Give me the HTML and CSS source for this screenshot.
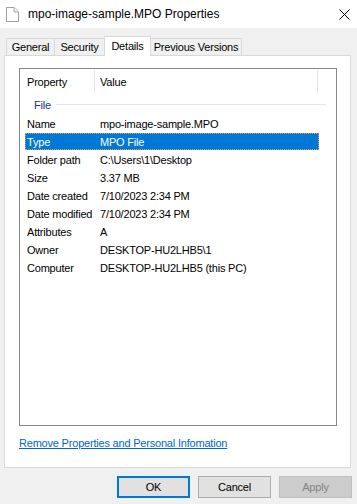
FILE: index.html
```html
<!DOCTYPE html>
<html>
<head>
<meta charset="utf-8">
<link rel="stylesheet" href="styles.css">
</head>
<body>
<div class="window">
  <div class="titlebar">
    <svg class="file-icon" width="13" height="15" viewBox="0 0 13 15">
      <path d="M0.5 0.5 H8 L12.5 5 V14.5 H0.5 Z" fill="#fff" stroke="#a0a0a0"/>
      <path d="M8 0.5 V5 H12.5" fill="#f4f4f4" stroke="#a0a0a0"/>
    </svg>
    <span class="title">mpo-image-sample.MPO Properties</span>
    <svg class="close" width="11" height="11" viewBox="0 0 11 11">
      <path d="M0.5 0.5 L10.5 10.5 M10.5 0.5 L0.5 10.5" stroke="#000" stroke-width="1"/>
    </svg>
  </div>

  <div class="tabs">
    <div class="tab t-general">General</div>
    <div class="tab t-security">Security</div>
    <div class="tab t-details sel">Details</div>
    <div class="tab t-prev">Previous Versions</div>
  </div>

  <div class="panel">
    <div class="listview">
      <div class="lv-header">
        <div class="hcell c1">Property</div>
        <div class="hcell c2">Value</div>
      </div>
      <div class="group">
        <span class="group-name">File</span>
        <span class="group-line"></span>
      </div>
      <div class="row"><span>Name</span><span>mpo-image-sample.MPO</span></div>
      <div class="row sel"><span>Type</span><span>MPO File</span></div>
      <div class="row"><span>Folder path</span><span>C:\Users\1\Desktop</span></div>
      <div class="row"><span>Size</span><span>3.37 MB</span></div>
      <div class="row"><span>Date created</span><span>7/10/2023 2:34 PM</span></div>
      <div class="row"><span>Date modified</span><span>7/10/2023 2:34 PM</span></div>
      <div class="row"><span>Attributes</span><span>A</span></div>
      <div class="row"><span>Owner</span><span>DESKTOP-HU2LHB5\1</span></div>
      <div class="row"><span>Computer</span><span>DESKTOP-HU2LHB5 (this PC)</span></div>
    </div>
    <div class="link-line"><a class="link" href="#">Remove Properties and Personal Infomation</a></div>
  </div>

  <div class="buttons">
    <div class="btn default">OK</div>
    <div class="btn">Cancel</div>
    <div class="btn disabled">Apply</div>
  </div>
</div>
</body>
</html>
```

FILE: styles.css
```css
html, body {
  margin: 0;
  padding: 0;
}
body {
  width: 357px;
  height: 504px;
  overflow: hidden;
  background: #f0f0f0;
  font-family: "Liberation Sans", Arial, sans-serif;
  font-size: 11px;
  letter-spacing: -0.2px;
  color: #000;
}
.window {
  width: 357px;
  height: 504px;
}
.titlebar {
  height: 28px;
  background: #fff;
  display: flex;
  align-items: center;
}
.file-icon {
  margin-left: 6px;
  flex: none;
}
.title {
  margin-left: 9px;
  font-size: 12px;
  letter-spacing: 0;
}
.close {
  margin-left: auto;
  margin-right: 7px;
  margin-top: 1px;
}

.tabs {
  display: flex;
  align-items: flex-start;
  margin-top: 8px;
  height: 20px;
  padding-left: 6px;
}
.tab {
  box-sizing: border-box;
  height: 17px;
  margin-top: 2px;
  border: 1px solid #d9d9d9;
  border-bottom: none;
  background: #f0f0f0;
  display: flex;
  align-items: center;
  justify-content: center;
  margin-left: -1px;
}
.t-general { width: 49px; margin-left: 0; }
.t-security { width: 51px; }
.t-details { width: 47px; }
.t-prev { width: 92px; }
.tab.sel {
  height: 20px;
  margin-top: 0;
  background: #fff;
  position: relative;
  z-index: 1;
  padding-bottom: 1px;
}

.panel {
  box-sizing: border-box;
  margin-top: -1px;
  margin-left: 4px;
  width: 347px;
  height: 413px;
  border: 1px solid #d9d9d9;
  background: #fff;
  padding: 12px 0 0 14px;
}
.listview {
  box-sizing: border-box;
  width: 318px;
  height: 358px;
  border: 1px solid #828790;
  background: #fff;
}
.lv-header {
  display: flex;
  height: 25px;
}
.hcell {
  box-sizing: border-box;
  height: 23px;
  margin-top: 1px;
  border-right: 1px solid #e5e5e5;
  display: flex;
  align-items: center;
}
.hcell.c1 { width: 75px; padding-left: 7px; }
.hcell.c2 { width: 223px; padding-left: 5px; }

.group {
  height: 21px;
  display: flex;
  align-items: center;
  padding-left: 14px;
}
.group-name {
  color: #1e3287;
}
.group-line {
  flex: 1;
  height: 1px;
  background: #e2e6ec;
  margin-left: 5px;
  margin-right: 10px;
  margin-top: -1px;
}
.row {
  box-sizing: border-box;
  margin-left: 5px;
  width: 294px;
  height: 17px;
  margin-bottom: 1px;
  border: 1px solid transparent;
  padding-left: 1px;
  display: grid;
  grid-template-columns: 73px 1fr;
  align-items: center;
  white-space: nowrap;
}
.row.sel {
  background: #0078d7;
  color: #fff;
  border: 1px dotted #e89a4a;
}

.link-line {
  margin-top: 10px;
  line-height: 14px;
}
.link {
  color: #0066cc;
  text-decoration: underline;
}

.buttons {
  display: flex;
  justify-content: flex-end;
  gap: 8px;
  padding-right: 5px;
  margin-top: 8px;
}
.btn {
  box-sizing: border-box;
  width: 73px;
  height: 22px;
  border: 1px solid #adadad;
  background: #e1e1e1;
  display: flex;
  align-items: center;
  justify-content: center;
}
.btn.default {
  border: 2px solid #0078d7;
}
.btn.disabled {
  background: #cccccc;
  border-color: #bfbfbf;
  color: #838383;
}
```
